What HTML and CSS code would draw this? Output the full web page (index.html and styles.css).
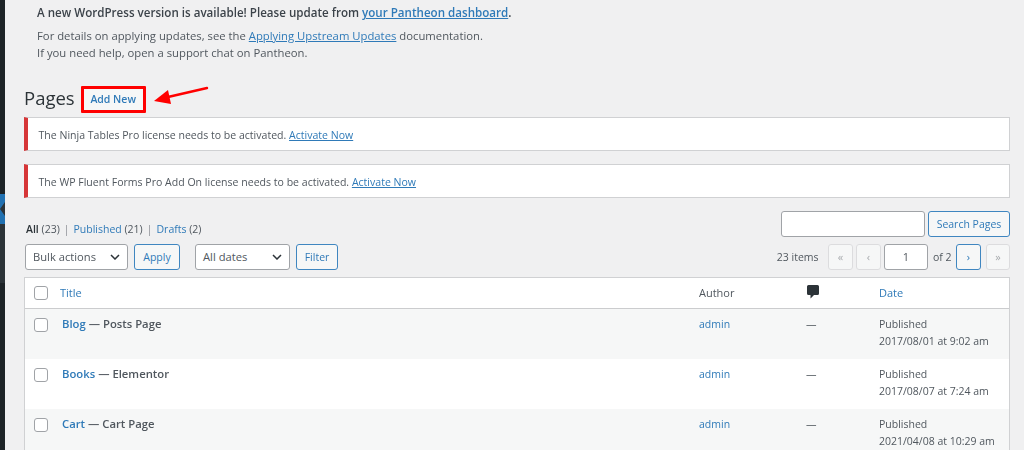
FILE: index.html
```html
<!DOCTYPE html>
<html lang="en">
<head>
<meta charset="utf-8">
<title>Pages</title>
<link rel="stylesheet" href="styles.css">
</head>
<body>
<div class="app">
  <aside class="sidebar"><span class="current-mark"></span></aside>
  <main class="content">
    <section class="update-note">
      <p class="update-title">A new WordPress version is available! Please update from <a href="#">your Pantheon dashboard</a>.</p>
      <p class="update-text">For details on applying updates, see the <a href="#">Applying Upstream Updates</a> documentation.<br>If you need help, open a support chat on Pantheon.</p>
    </section>
    <header class="heading">
      <h1>Pages</h1>
      <a class="add-new" href="#">Add New</a>
      <svg class="arrow" width="60" height="24" viewBox="0 0 60 24"><path d="M56 4 L17 13" stroke="#f00" stroke-width="2.400" stroke-linecap="round" fill="none"/><path d="M3 17 L17 6 L20 20 Z" fill="#f00"/></svg>
    </header>
    <div class="notice">The Ninja Tables Pro license needs to be activated. <a href="#">Activate Now</a></div>
    <div class="notice">The WP Fluent Forms Pro Add On license needs to be activated. <a href="#">Activate Now</a></div>
    <div class="filter-area">
      <div class="filter-left">
        <ul class="subsub">
          <li><b>All</b> <span class="count">(23)</span></li>
          <li class="sep">|</li>
          <li><a href="#">Published</a> <span class="count">(21)</span></li>
          <li class="sep">|</li>
          <li><a href="#">Drafts</a> <span class="count">(2)</span></li>
        </ul>
        <div class="actions">
          <div class="select bulk">Bulk actions<svg width="10" height="6" viewBox="0 0 10 6"><path d="M1 1l4 4 4-4" stroke="#2c3338" stroke-width="1.500" fill="none"/></svg></div>
          <button class="btn apply">Apply</button>
          <div class="select dates">All dates<svg width="10" height="6" viewBox="0 0 10 6"><path d="M1 1l4 4 4-4" stroke="#2c3338" stroke-width="1.500" fill="none"/></svg></div>
          <button class="btn filter">Filter</button>
        </div>
      </div>
      <div class="filter-right">
        <div class="search"><div class="input search-input"></div><button class="btn search-btn">Search Pages</button></div>
        <div class="pager">
          <span class="items">23 items</span>
          <span class="page off">«</span>
          <span class="page off">‹</span>
          <div class="input page-input">1</div>
          <span class="of">of 2</span>
          <span class="page on">›</span>
          <span class="page off last">»</span>
        </div>
      </div>
    </div>
    <div class="table">
      <div class="row head">
        <div class="check"><i></i></div>
        <div class="col-title"><a href="#">Title</a></div>
        <div class="col-author">Author</div>
        <div class="col-comment"><svg class="comment-icon" width="12" height="14" viewBox="0 0 12 14"><path d="M1.500 0h9A1.500 1.500 0 0 1 12 1.500v7A1.500 1.500 0 0 1 10.500 10H7l-3.500 3.500V10h-2A1.500 1.500 0 0 1 0 8.500v-7A1.500 1.500 0 0 1 1.500 0z" fill="#2c3338"/></svg></div>
        <div class="col-date"><a href="#">Date</a></div>
      </div>
      <div class="row alt">
        <div class="check"><i></i></div>
        <div class="col-title page-title"><a href="#">Blog</a> — Posts Page</div>
        <div class="col-author"><a href="#">admin</a></div>
        <div class="col-comment">—</div>
        <div class="col-date">Published<br>2017/08/01 at 9:02 am</div>
      </div>
      <div class="row">
        <div class="check"><i></i></div>
        <div class="col-title page-title"><a href="#">Books</a> — Elementor</div>
        <div class="col-author"><a href="#">admin</a></div>
        <div class="col-comment">—</div>
        <div class="col-date">Published<br>2017/08/07 at 7:24 am</div>
      </div>
      <div class="row alt">
        <div class="check"><i></i></div>
        <div class="col-title page-title"><a href="#">Cart</a> — Cart Page</div>
        <div class="col-author"><a href="#">admin</a></div>
        <div class="col-comment">—</div>
        <div class="col-date">Published<br>2021/04/08 at 10:29 am</div>
      </div>
    </div>
  </main>
</div>
</body>
</html>
```
FILE: styles.css
```css
* { box-sizing: border-box; }
html, body { margin: 0; height: 450px; overflow: hidden; }
body { background: #f0f0f1; color: #50575e; font: 11px/16px "Open Sans", sans-serif; }
a { color: #2f7ab8; }
.app { display: flex; height: 450px; overflow: hidden; filter: blur(0.4px); }
.sidebar { width: 5px; flex: none; background: linear-gradient(#1d2327 194px, #2c3338 194px, #2c3338 283px, #1d2327 283px); position: relative; }
.current-mark { position: absolute; left: 0; top: 194px; width: 5px; height: 30px; background: #2271b1; clip-path: polygon(0 0, 100% 0, 100% 8px, 0 15px, 100% 22px, 100% 100%, 0 100%); }
.content { flex: 1; min-width: 0; padding: 0 14px 0 19px; }
.update-note { padding: 5px 0 0 13px; height: 83px; }
.update-note p { margin: 0; }
.update-title { font-weight: 600; font-size: 11.600px; color: #3c434a; height: 22px; line-height: 16px; }
.update-text { font-size: 11.300px; line-height: 17px; }
.heading { display: flex; align-items: center; height: 32px; }
h1 { margin: -2px 0 0; font-size: 18.500px; line-height: 26px; font-weight: 400; color: #2c3338; }
.add-new { margin-left: 6px; width: 65px; height: 27px; display: flex; align-items: center; justify-content: center; background: #f6f7f7; border: 3px solid #f00; border-radius: 1px; font-weight: 600; text-decoration: none; font-size: 10.500px; }
.arrow { margin-left: 5px; align-self: flex-start; margin-top: 1px; }
.notice { height: 34px; margin-bottom: 13px; background: #fff; border: 1px solid #d0d1d3; border-left: 4px solid #d63638; padding: 0 12px 0 10.500px; line-height: 34px; color: #50575e; font-size: 10.550px; }
.heading + .notice { margin-top: 2px; }
.filter-area { display: flex; justify-content: space-between; height: 67px; margin-top: -1px; }
.filter-left { padding-top: 11px; }
.subsub { list-style: none; margin: 0 0 7px 2px; padding: 0; display: flex; gap: 4px; font-size: 10.500px; height: 16px; align-items: center; }
.subsub b { color: #2c3338; font-weight: 600; }
.subsub a { text-decoration: none; }
.sep { color: #8c8f94; }
.actions { display: flex; margin-left: 1px; }
.select { height: 26px; background: #fff; border: 1px solid #a0a3a7; border-radius: 3px; display: flex; align-items: center; justify-content: space-between; padding: 0 7px; color: #50575e; font-size: 11.200px; }
.select svg { flex: none; }
.bulk { width: 103px; }
.dates { width: 95px; }
.btn { height: 26px; padding: 0; background: #f6f7f7; border: 1px solid #3f86c0; border-radius: 3px; color: #2f7ab8; font: 10.500px/24px "Open Sans", sans-serif; }
.apply { width: 46px; margin: 0 15px 0 6px; }
.filter { width: 42px; margin-left: 6px; }
.filter-right { display: flex; flex-direction: column; align-items: flex-end; padding-top: 1px; }
.search { display: flex; gap: 3px; height: 26px; margin-bottom: 7px; }
.input { background: #fff; border: 1px solid #a0a3a7; border-radius: 3px; }
.search-input { width: 144px; height: 26px; }
.search-btn { width: 82px; }
.pager { display: flex; align-items: center; height: 26px; }
.items { margin-right: 9.500px; font-size: 10.500px; }
.page { width: 25px; height: 26px; margin-right: 3px; border-radius: 3px; display: flex; align-items: center; justify-content: center; font-size: 11px; line-height: 1; padding-bottom: 2px; }
.page.on { margin-right: 5px; }
.page.last { margin-right: 0; width: 24px; }
.off { background: #f6f7f7; border: 1px solid #dcdcde; color: #a7aaad; }
.on { background: #f6f7f7; border: 1px solid #3f86c0; color: #2f7ab8; }
.page-input { width: 44px; height: 26px; text-align: center; line-height: 24px; color: #50575e; }
.of { margin: 0 5px; font-size: 10.500px; width: 18px; white-space: nowrap; }
.table { background: #fff; border: 1px solid #d0d1d3; border-bottom: 0; height: 173px; }
.row { display: flex; height: 50.200px; padding-top: 7px; line-height: 16.500px; font-size: 10.500px; }
.row.head { height: 31px; padding-top: 7px; border-bottom: 1px solid #cbccce; line-height: 16px; font-size: 11px; }
.alt { background: #f6f7f7; }
.check { width: 35px; flex: none; padding-left: 9px; }
.check i { display: block; width: 14px; height: 14px; margin-top: 1px; background: #fff; border: 1px solid #a0a3a7; border-radius: 3px; }
.row:not(.head) .check i { margin-top: 2px; }
.col-title { width: 639px; flex: none; }
.col-title a { text-decoration: none; }
.page-title { padding-left: 2px; font-weight: 600; font-size: 11.300px; }
.col-author { width: 107px; flex: none; color: #50575e; }
.col-author a { text-decoration: none; }
.col-comment { width: 73px; flex: none; }
.comment-icon { margin-left: 1px; }
.col-date { color: #50575e; }
.col-date a { text-decoration: none; }
```
